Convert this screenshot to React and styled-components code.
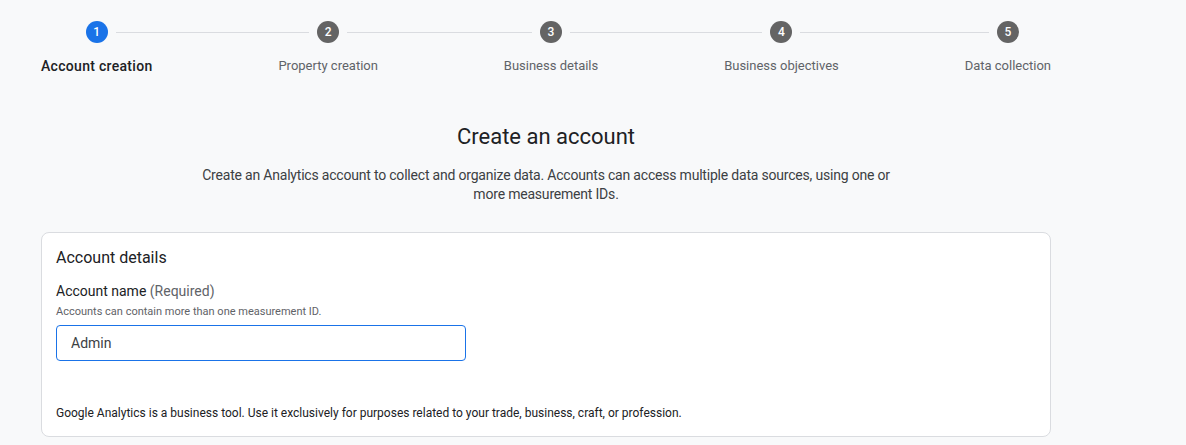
import React from "react";
import styled, { createGlobalStyle } from "styled-components";

const Global = createGlobalStyle`
  html, body { margin: 0; padding: 0; background: #f8f9fa; }
  body { font-family: Roboto, "Noto Sans", Arial, sans-serif; color: #202124; }
  * { box-sizing: border-box; }
`;

const Page = styled.div`
  width: 1010px;
  margin-left: 41px;
  padding-top: 21px;
`;

const Stepper = styled.div`
  display: flex;
  align-items: flex-start;
`;

const Step = styled.div`
  display: flex;
  flex-direction: column;
  align-items: center;
`;

const CircleRow = styled.div`
  display: flex;
  align-items: center;
  align-self: stretch;
  height: 22px;
`;

const Line = styled.div`
  flex: 1;
  height: 1px;
  background: ${(p) => (p.$hidden ? "transparent" : "#dadce0")};
  margin: ${(p) => (p.$side === "left" ? "0 8px 0 0" : "0 0 0 8px")};
`;

const Connector = styled.div`
  flex: 1;
  height: 22px;
  display: flex;
  align-items: center;
  &::before {
    content: "";
    flex: 1;
    height: 1px;
    background: #dadce0;
  }
`;

const Circle = styled.div`
  width: 22px;
  height: 22px;
  border-radius: 50%;
  background: ${(p) => (p.$active ? "#1a73e8" : "#646464")};
  color: #fff;
  font-size: 12px;
  font-weight: 500;
  display: flex;
  align-items: center;
  justify-content: center;
  flex: none;
`;

const StepLabel = styled.div`
  margin-top: 14px;
  font-size: ${(p) => (p.$active ? "14px" : "13px")};
  font-weight: ${(p) => (p.$active ? 500 : 400)};
  letter-spacing: ${(p) => (p.$active ? "0.3px" : "0")};
  color: ${(p) => (p.$active ? "#202124" : "#5f6368")};
  white-space: nowrap;
  line-height: 18px;
`;

const Title = styled.h1`
  margin: 48px 0 0;
  text-align: center;
  font-size: 22px;
  font-weight: 400;
  color: #202124;
  line-height: 28px;
`;

const Description = styled.p`
  margin: 15px auto 0;
  max-width: 710px;
  text-align: center;
  font-size: 14px;
  line-height: 19px;
  letter-spacing: -0.2px;
  color: #3c4043;
`;

const Card = styled.section`
  margin-top: 28px;
  background: #fff;
  border: 1px solid #dadce0;
  border-radius: 8px;
  padding: 14px 14px 15px;
  height: 205px;
  display: flex;
  flex-direction: column;
`;

const CardTitle = styled.h2`
  margin: 0;
  font-size: 16px;
  font-weight: 400;
  line-height: 22px;
  color: #202124;
`;

const FieldLabel = styled.div`
  margin-top: 12px;
  font-size: 14px;
  line-height: 20px;
  color: #202124;
`;

const Muted = styled.span`
  color: #5f6368;
`;

const Hint = styled.div`
  margin-top: 3px;
  font-size: 11px;
  line-height: 16px;
  color: #5f6368;
`;

const Input = styled.input`
  margin-top: 5px;
  width: 410px;
  height: 36px;
  border: 1px solid #1a73e8;
  border-radius: 4px;
  padding: 0 14px;
  font-family: inherit;
  font-size: 14px;
  color: #3c4043;
  outline: none;
  background: #fff;
`;

const Footnote = styled.p`
  margin: auto 0 0;
  font-size: 12px;
  line-height: 16px;
  color: #202124;
`;

const steps = [
  "Account creation",
  "Property creation",
  "Business details",
  "Business objectives",
  "Data collection",
];

export default function App() {
  return (
    <>
      <Global />
      <Page>
        <Stepper>
          {steps.map((label, i) => (
            <React.Fragment key={label}>
              {i > 0 && <Connector />}
              <Step>
                <CircleRow>
                  <Line $side="left" $hidden={i === 0} />
                  <Circle $active={i === 0}>{i + 1}</Circle>
                  <Line $side="right" $hidden={i === steps.length - 1} />
                </CircleRow>
                <StepLabel $active={i === 0}>{label}</StepLabel>
              </Step>
            </React.Fragment>
          ))}
        </Stepper>
        <Title>Create an account</Title>
        <Description>
          Create an Analytics account to collect and organize data. Accounts can access multiple data
          sources, using one or more measurement IDs.
        </Description>
        <Card>
          <CardTitle>Account details</CardTitle>
          <FieldLabel>
            Account name <Muted>(Required)</Muted>
          </FieldLabel>
          <Hint>Accounts can contain more than one measurement ID.</Hint>
          <Input defaultValue="Admin" />
          <Footnote>
            Google Analytics is a business tool. Use it exclusively for purposes related to your trade,
            business, craft, or profession.
          </Footnote>
        </Card>
      </Page>
    </>
  );
}
